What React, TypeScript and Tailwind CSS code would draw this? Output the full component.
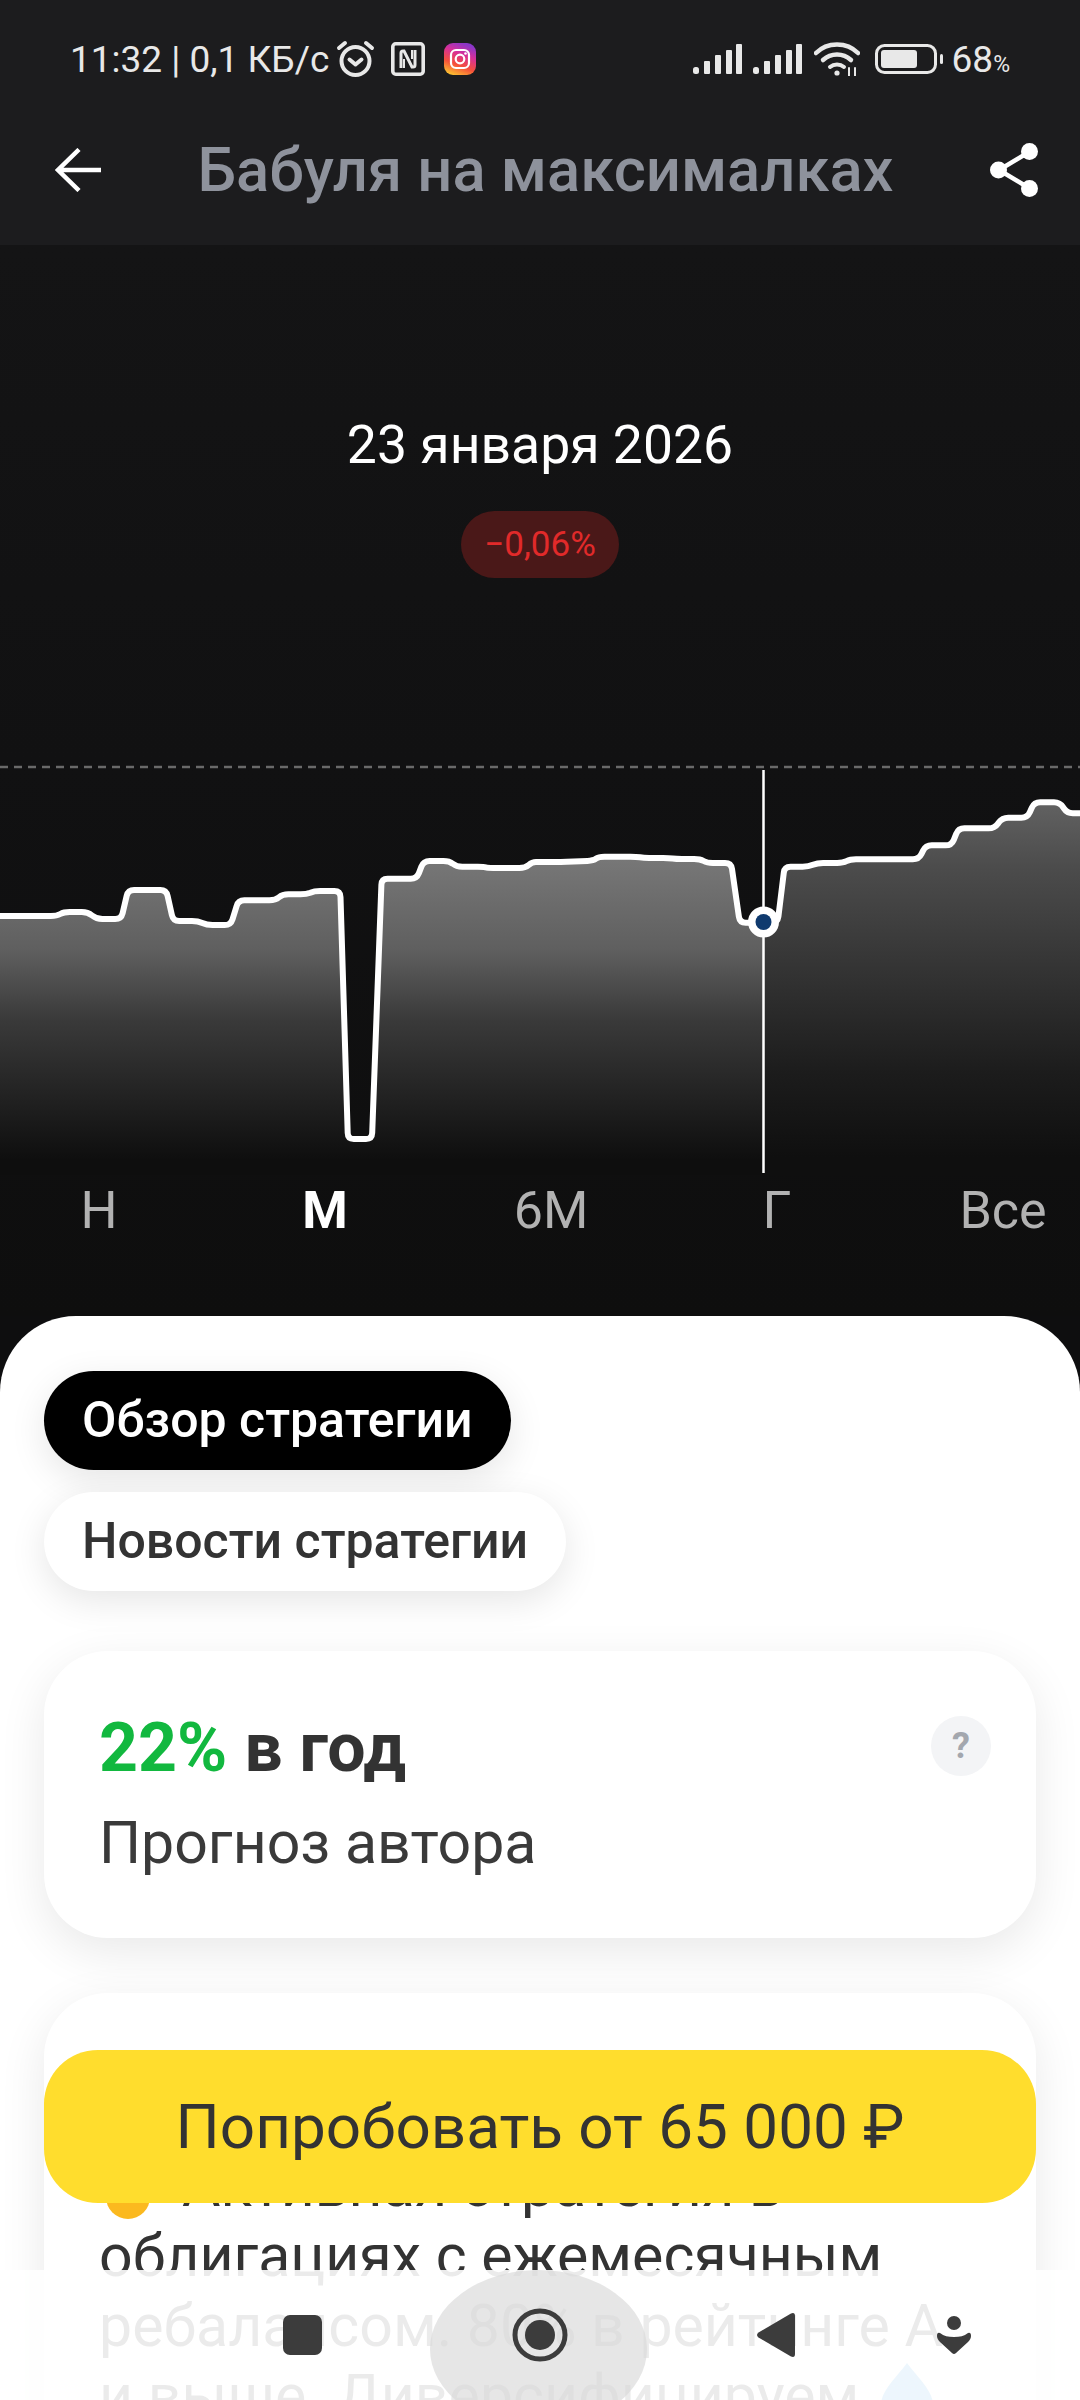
import React from "react";

const L: number[][] = [[0,528],[165,528],[185,516],[255,516],[280,537],[352,537],[372,450],[483,450],[503,543],[575,543],[600,555],[670,555],[692,481],[800,481],[820,463],[890,463],[912,453],[988,453],[1010,1197],[1080,1197],[1108,416],[1210,416],[1230,363],[1305,363],[1325,380],[1405,380],[1415,384],[1525,384],[1545,366]];
const R: number[][] = [[0,366],[60,366],[155,362],[170,350],[280,350],[300,354],[375,354],[395,357],[465,357],[485,369],[555,369],[580,548],[690,548],[710,380],[780,380],[805,369],[880,369],[900,358],[1100,358],[1120,316],[1195,316],[1215,265],[1320,265],[1342,233],[1415,233],[1435,187],[1510,187],[1530,220],[1568,220]];
const pts: number[][] = [
  ...L.map(([x, y]) => [x * 0.3444, 740 + y / 3 - 760]),
  ...R.map(([x, y]) => [540 + x * 0.3444, 740 + y / 3 - 760]),
];

function roundedPath(p: number[][], r: number) {
  let d = `M${p[0][0].toFixed(1)} ${p[0][1].toFixed(1)}`;
  for (let i = 1; i < p.length - 1; i++) {
    const [ax, ay] = p[i - 1], [bx, by] = p[i], [cx, cy] = p[i + 1];
    const l1 = Math.hypot(bx - ax, by - ay), l2 = Math.hypot(cx - bx, cy - by);
    const r1 = Math.min(r, l1 / 2), r2 = Math.min(r, l2 / 2);
    const sx = bx - ((bx - ax) / l1) * r1, sy = by - ((by - ay) / l1) * r1;
    const ex = bx + ((cx - bx) / l2) * r2, ey = by + ((cy - by) / l2) * r2;
    d += `L${sx.toFixed(1)} ${sy.toFixed(1)}Q${bx.toFixed(1)} ${by.toFixed(1)} ${ex.toFixed(1)} ${ey.toFixed(1)}`;
  }
  const last = p[p.length - 1];
  return d + `L${last[0].toFixed(1)} ${last[1].toFixed(1)}`;
}
const linePath = roundedPath(pts, 6);
const areaPath = linePath + "L1080 415L0 415Z";

function Signal() {
  return (
    <svg width="49" height="30" viewBox="0 0 49 30" fill="#e8e8e8">
      <rect x="0" y="23" width="6" height="7" rx="2.500" />
      <rect x="11" y="17" width="6" height="13" rx="1" />
      <rect x="22" y="11" width="6" height="19" rx="1" />
      <rect x="33" y="6" width="6" height="24" rx="1" />
      <rect x="43" y="0" width="6" height="30" rx="1" />
    </svg>
  );
}

export default function App() {
  const font = { fontFamily: "Roboto, 'Noto Sans', sans-serif" };
  return (
    <div style={font} className="relative w-[1080px] h-[2400px] overflow-hidden bg-[#0e0e0f]">
      {/* top app bar */}
      <div className="bg-[#1c1c1e]">
        <div className="h-[100px] flex items-center justify-between pl-[70px] pr-[70px] pt-[18px] text-[#e8e8e8]">
          <div className="flex items-center">
            <span className="text-[37px] leading-none whitespace-nowrap">11:32 | 0,1 КБ/с</span>
            <svg className="ml-[7px]" width="39" height="38" viewBox="0 0 39 38" fill="none" stroke="#e8e8e8" strokeWidth="4" strokeLinecap="round" strokeLinejoin="round">
              <circle cx="19.5" cy="21" r="14" />
              <path d="M13.5 19.5l6 5 6-5" />
              <path d="M3 8l6-5M36 8l-6-5" />
            </svg>
            <svg className="ml-[16px]" width="34" height="34" viewBox="0 0 34 34" fill="none" stroke="#e8e8e8">
              <rect x="1.8" y="1.800" width="30.400" height="30.400" rx="3" strokeWidth="3.600" />
              <path d="M10 26V11q0-2 2-2h1l8 16h1q2 0 2-2V8" strokeWidth="3" />
              <path d="M13 17v9M21 8v9" strokeWidth="2" />
            </svg>
            <svg className="ml-[19px]" width="32" height="32" viewBox="0 0 32 32" fill="none">
              <defs>
                <linearGradient id="ig" x1="0.2" y1="1" x2="0.6" y2="0">
                  <stop offset="0" stopColor="#fdc830" />
                  <stop offset="0.35" stopColor="#f5503a" />
                  <stop offset="0.7" stopColor="#d62f9a" />
                  <stop offset="1" stopColor="#8a36c9" />
                </linearGradient>
              </defs>
              <rect width="32" height="32" rx="9" fill="url(#ig)" />
              <rect x="7" y="7" width="18" height="18" rx="5" stroke="#fff" strokeWidth="2.2" />
              <circle cx="16" cy="16" r="4.3" stroke="#fff" strokeWidth="2.2" />
              <circle cx="21.5" cy="10.5" r="1.3" fill="#fff" />
            </svg>
          </div>
          <div className="flex items-center">
            <Signal />
            <div className="ml-[11px]"><Signal /></div>
            <svg className="ml-[12px]" width="46" height="34" viewBox="0 0 46 34" fill="none" stroke="#e8e8e8" strokeLinecap="round">
              <path d="M2 11C13 -0.5 33 -0.5 44 11" strokeWidth="4.500" />
              <path d="M9 18c8-7.5 20-7.5 28 0" strokeWidth="4.500" />
              <path d="M16 25c4-3.5 10-3.5 14 0" strokeWidth="4" />
              <circle cx="23" cy="31" r="2.6" fill="#e8e8e8" stroke="none" />
              <path d="M35 26v8M41 26v8" strokeWidth="2" />
            </svg>
            <svg className="ml-[15px]" width="68" height="30" viewBox="0 0 68 30" fill="none">
              <rect x="1.5" y="1.5" width="59" height="27" rx="8" stroke="#e8e8e8" strokeWidth="3" />
              <rect x="6" y="6" width="36" height="18" rx="3" fill="#e8e8e8" />
              <rect x="65" y="10" width="3" height="10" rx="1.5" fill="#e8e8e8" />
            </svg>
            <span className="ml-[9px] text-[37px] leading-none whitespace-nowrap">68<span className="text-[23px]">%</span></span>
          </div>
        </div>
        <div className="h-[145px] relative flex items-center justify-between pl-[55px] pr-[42px] pb-[6px]">
          <svg width="46" height="44" viewBox="0 0 46 44" fill="none" stroke="#fff" strokeWidth="4.5">
            <path d="M46 22H3M24 1.5L3 22l21 20.5" />
          </svg>
          <span className="text-[61.500px] leading-[64px] font-medium text-[#8e929c] whitespace-nowrap">Бабуля на максималках</span>
          <svg width="48" height="54" viewBox="0 0 48 54" fill="none">
            <path d="M39 9L9 27l30 18" stroke="#fff" strokeWidth="4.5" />
            <circle cx="39.500" cy="8.500" r="8.500" fill="#fff" />
            <circle cx="8.500" cy="27" r="8.500" fill="#fff" />
            <circle cx="39.500" cy="45.500" r="8.500" fill="#fff" />
          </svg>
        </div>
      </div>

      {/* summary */}
      <div className="h-[515px] bg-gradient-to-b from-[#141415] to-[#111112] flex flex-col items-center pt-[170px]">
        <div className="text-[53.5px] leading-[60px] text-white whitespace-nowrap">23 января 2026</div>
        <div className="mt-[36px] w-[158px] h-[67px] rounded-full bg-[#4a1818] flex items-center justify-center text-[#e12a2a] text-[35px] leading-none">−0,06%</div>
      </div>

      {/* chart */}
      <div className="bg-gradient-to-b from-[#111112] to-[#0e0e0e] h-[556px] flex flex-col">
        <svg width="1080" height="415" viewBox="0 0 1080 415" className="block shrink-0">
          <defs>
            <linearGradient id="leftFill" gradientUnits="userSpaceOnUse" x1="0" y1="100" x2="0" y2="400">
              <stop offset="0" stopColor="#777777" />
              <stop offset="0.3" stopColor="#5f5f5f" />
              <stop offset="0.53" stopColor="#3a3a3a" />
              <stop offset="0.82" stopColor="#1f1f1f" />
              <stop offset="1" stopColor="#0e0e0e" />
            </linearGradient>
            <linearGradient id="rightFill" gradientUnits="userSpaceOnUse" x1="0" y1="47" x2="0" y2="397">
              <stop offset="0" stopColor="#606060" />
              <stop offset="0.17" stopColor="#4c4c4c" />
              <stop offset="0.474" stopColor="#333333" />
              <stop offset="0.76" stopColor="#1c1c1c" />
              <stop offset="1" stopColor="#0f0f0f" />
            </linearGradient>
            <clipPath id="cl"><rect x="0" y="0" width="763" height="415" /></clipPath>
            <clipPath id="cr"><rect x="763" y="0" width="317" height="415" /></clipPath>
          </defs>
          <line x1="0" y1="7" x2="1080" y2="7" stroke="#6a6a6a" strokeWidth="2.500" strokeDasharray="8 6" />
          <path d={areaPath} fill="url(#leftFill)" clipPath="url(#cl)" />
          <path d={areaPath} fill="url(#rightFill)" clipPath="url(#cr)" />
          <path d={linePath} fill="none" stroke="#fff" strokeWidth="6" strokeLinejoin="round" />
          <line x1="763.500" y1="10" x2="763.500" y2="413" stroke="#fff" strokeWidth="2.5" />
          <circle cx="763.500" cy="162" r="15.500" fill="#fff" />
          <circle cx="763.500" cy="162" r="8" fill="#0f3a6e" />
        </svg>
        <div className="mt-[8px] ml-[-14px] w-[1130px] grid grid-cols-5 text-[52px] leading-[56px] text-center text-[#b2b2b2]">
          <span>Н</span>
          <span className="font-bold text-white">М</span>
          <span>6М</span>
          <span>Г</span>
          <span>Все</span>
        </div>
      </div>

      {/* sheet */}
      <div className="absolute left-0 top-[1316px] w-[1080px] h-[1084px] bg-white rounded-t-[76px] pt-[55px] px-[44px] text-[#333333]">
        <div className="flex flex-col items-start gap-[22px]">
          <div className="h-[99px] px-[38px] rounded-full bg-black text-white text-[50px] font-medium flex items-center whitespace-nowrap shadow-[0_10px_36px_rgba(0,0,0,0.1)]">Обзор стратегии</div>
          <div className="h-[99px] px-[38px] rounded-full bg-white text-[#333333] text-[50px] font-medium flex items-center whitespace-nowrap shadow-[0_10px_36px_rgba(0,0,0,0.1)]">Новости стратегии</div>
        </div>
        <div className="mt-[60px] h-[287px] rounded-[64px] bg-white shadow-[0_14px_48px_rgba(0,0,0,0.09)] pl-[55px] pr-[44px] pt-[58px] relative">
          <div className="text-[68px] leading-[78px] font-bold whitespace-nowrap"><span className="text-[#12b83f]">22%</span> в год</div>
          <div className="mt-[24px] text-[59px] leading-[64px] text-[#3a3a3a] whitespace-nowrap">Прогноз автора</div>
          <div className="absolute right-[45px] top-[65px] w-[60px] h-[60px] rounded-full bg-[#f3f4f6] flex items-center justify-center text-[#a3a7ae] text-[36px] font-bold">?</div>
        </div>
        <div className="mt-[55px] rounded-[64px] bg-white shadow-[0_14px_48px_rgba(0,0,0,0.09)] pl-[55px] pr-[40px] pt-[158px] pb-[80px] text-[59px] leading-[70px] text-[#333333]">
          <div className="whitespace-nowrap flex items-center">
            <span className="inline-block w-[44px] h-[50px] rounded-full bg-[#fbb91f] ml-[7px] mr-[32px] translate-y-[8px]" />
            <span>Активная стратегия в</span>
          </div>
          <div className="whitespace-nowrap">облигациях с ежемесячным</div>
          <div className="whitespace-nowrap">ребалансом. 80% в рейтинге А</div>
          <div className="whitespace-nowrap flex items-center">
            <span>и выше. Диверсифицируем</span>
            <svg className="ml-[16px]" width="64" height="70" viewBox="0 0 64 70"><path d="M32 2C20 18 6 30 6 44a26 24 0 0 0 52 0C58 30 44 18 32 2z" fill="#4aa8e8" /></svg>
          </div>
        </div>
      </div>

      {/* sticky button */}
      <div className="absolute left-[44px] top-[2050px] w-[992px] h-[153px] rounded-[54px] bg-[#ffdd2d] flex items-center justify-center text-[62px] text-[#333333] whitespace-nowrap">Попробовать от 65 000 ₽</div>

      {/* system nav */}
      <div className="absolute left-0 top-[2270px] w-[1080px] h-[130px] bg-white/90 overflow-hidden">
        <div className="absolute left-[430px] top-0 w-[217px] h-[158px] rounded-[50%] bg-[#d8d8d8]/65" />
        <div className="absolute left-[283px] top-[45px] w-[39px] h-[40px] rounded-[7px] bg-[#3c3c3c]" />
        <svg className="absolute left-[512px] top-[38px]" width="56" height="54" viewBox="0 0 56 54" fill="none">
          <ellipse cx="28" cy="27" rx="25" ry="24" stroke="#3c3c3c" strokeWidth="5" />
          <ellipse cx="28" cy="27" rx="15" ry="15" fill="#3c3c3c" />
        </svg>
        <svg className="absolute left-[757px] top-[42px]" width="38" height="46" viewBox="0 0 38 46" fill="#3c3c3c">
          <path d="M34 1.500Q38 0 38 4v38q0 4-4 2.500L1.500 25.500q-3-2.500 0-5z" />
        </svg>
        <svg className="absolute left-[937px] top-[45px]" width="34" height="40" viewBox="0 0 34 40" fill="#3c3c3c">
          <circle cx="17" cy="8" r="7" />
          <path d="M3 18c4 3 8 4 14 4s10-1 14-4q3-1 3 3c0 2-1 4-3 6L19 38q-2 2-4 0L3 27c-2-2-3-4-3-6q0-4 3-3z" />
        </svg>
      </div>
    </div>
  );
}
